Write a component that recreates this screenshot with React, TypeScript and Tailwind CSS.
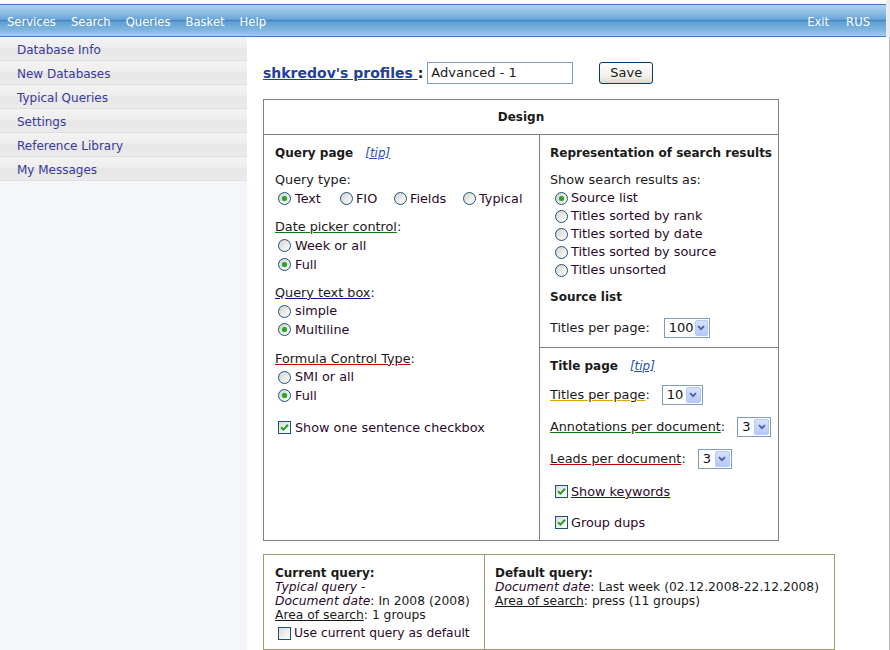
import React from "react";

const font = { fontFamily: '"DejaVu Sans", Verdana, sans-serif' };

const Radio = ({ checked }: { checked?: boolean }) => (
  <span className="inline-flex h-[13px] w-[13px] shrink-0 items-center justify-center rounded-full border border-[#1c5180] bg-[linear-gradient(135deg,#d4d4cc,#ffffff)]">
    {checked && <span className="h-[5px] w-[5px] rounded-full bg-[#2aa52a] shadow-[0_0_1px_#61c561]" />}
  </span>
);

const Check = ({ checked }: { checked?: boolean }) => (
  <span className="inline-flex h-[13px] w-[13px] shrink-0 items-center justify-center border border-[#1c5180] bg-[linear-gradient(135deg,#dcdcd7,#ffffff)]">
    {checked && (
      <svg width="9" height="9" viewBox="0 0 9 9">
        <path d="M1 4.2 L3.4 6.6 L8 1.8" fill="none" stroke="#21a121" strokeWidth="2" />
      </svg>
    )}
  </span>
);

const Select = ({ value, className }: { value: string; className: string }) => (
  <span className={"inline-flex h-[20px] items-center border border-[#7f9db9] bg-white pl-[4px] text-[13px] text-[#111] " + className}>
    <span className="flex-1">{value}</span>
    <span className="m-[1px] flex h-[16px] w-[15px] items-center justify-center rounded-[2px] border border-[#b6c9f4] bg-[linear-gradient(#d7e3fd,#b3c8f8)]">
      <svg width="8" height="6" viewBox="0 0 8 6">
        <path d="M1 1.2 L4 4.2 L7 1.2" fill="none" stroke="#4d5f9c" strokeWidth="1.8" />
      </svg>
    </span>
  </span>
);

const RadioLine = ({ label, checked, className = "" }: { label: string; checked?: boolean; className?: string }) => (
  <div className={"flex items-center gap-[4px] " + className}>
    <Radio checked={checked} />
    <span className="text-[#2a0a2a]">{label}</span>
  </div>
);

const Tip = () => (
  <a className="text-[12px] italic text-[#2850b0] underline" href="#">[tip]</a>
);

export default function App() {
  const nav = ["Services", "Search", "Queries", "Basket", "Help"];
  const side = ["Database Info", "New Databases", "Typical Queries", "Settings", "Reference Library", "My Messages"];
  return (
    <div className="flex h-[650px] w-[890px] overflow-hidden bg-white text-[12.8px] text-[#1a1a1a]" style={font}>
      <div className="flex w-[886px] flex-col">
        <div className="h-[4px] shrink-0 bg-white" />
        <div className="flex h-[33px] shrink-0 items-center border-y border-[#3d80c0] bg-[linear-gradient(#b2d2ee_0%,#8dbde4_25%,#6aa6d8_46%,#4687c5_50%,#62a0d5_56%,#7fb4df_80%,#a6cbea_100%)] pt-[4px] text-[11.6px] text-white">
          <div className="flex gap-[15px] pl-[7px]">
            {nav.map((n) => (
              <span key={n}>{n}</span>
            ))}
          </div>
          <div className="ml-auto flex gap-[17px] pr-[16px]">
            <span>Exit</span>
            <span>RUS</span>
          </div>
        </div>
        <div className="flex min-h-0 flex-1">
          <div className="w-[247px] shrink-0 bg-[#f5f6fa]">
            {side.map((s) => (
              <div
                key={s}
                className="flex h-[24px] items-center border-b border-[#dedede] bg-[linear-gradient(#f3f3f3_0%,#efefef_40%,#e6e6e6_55%,#ebebeb_100%)] pl-[17px] pt-[3px] text-[12px] text-[#3a3a9a]"
              >
                {s}
              </div>
            ))}
          </div>
          <div className="flex-1 pl-[16px] pt-[25px]">
            <div className="flex h-[22px] items-center">
              <a href="#" className="text-[14px] font-bold text-[#1f3f9a] underline">shkredov's profiles{"\u00a0"}</a>
              <span className="text-[14px] font-bold">:</span>
              <span className="ml-[4px] flex h-[22px] w-[146px] items-center border border-[#7f9db9] bg-white pl-[3px] text-[13px]">Advanced - 1</span>
              <span className="ml-[26px] flex h-[22px] w-[54px] items-center justify-center rounded-[3px] border border-[#003c74] bg-[linear-gradient(#ffffff,#f0efe8_70%,#dcd9cc)] text-[13px]">Save</span>
            </div>

            <div className="mt-[15px] w-[516px] border border-[#808080]">
              <div className="flex h-[35px] items-center justify-center border-b border-[#808080] text-[12px] font-bold">Design</div>
              <div className="flex">
                <div className="w-[276px] border-r border-[#808080] pb-[10px] pl-[11px] pt-[8px]">
                  <div className="flex h-[19px] items-center gap-[12px]">
                    <span className="text-[12px] font-bold">Query page</span>
                    <Tip />
                  </div>
                  <div className="mt-[8px] flex h-[19px] items-center">Query type:</div>
                  <div className="flex h-[19px] items-center pl-[3px]">
                    <div className="flex w-[62px] items-center gap-[4px]"><Radio checked /><span className="text-[#2a0a2a]">Text</span></div>
                    <div className="flex w-[54px] items-center gap-[3px]"><Radio /><span className="text-[#2a0a2a]">FIO</span></div>
                    <div className="flex w-[69px] items-center gap-[3px]"><Radio /><span className="text-[#2a0a2a]">Fields</span></div>
                    <div className="flex items-center gap-[3px]"><Radio /><span className="text-[#2a0a2a]">Typical</span></div>
                  </div>
                  <div className="mt-[9px] flex h-[19px] items-center">
                    <span className="underline decoration-[#0a7a0a]">Date picker control</span>:
                  </div>
                  <RadioLine label="Week or all" className="h-[19px] pl-[3px]" />
                  <RadioLine label="Full" checked className="h-[19px] pl-[3px]" />
                  <div className="mt-[9px] flex h-[19px] items-center">
                    <span className="underline decoration-[#1010a0]">Query text box</span>:
                  </div>
                  <RadioLine label="simple" className="h-[18px] pl-[3px]" />
                  <RadioLine label="Multiline" checked className="h-[19px] pl-[3px]" />
                  <div className="mt-[10px] flex h-[19px] items-center">
                    <span className="underline decoration-[#d00000]">Formula Control Type</span>:
                  </div>
                  <RadioLine label="SMI or all" className="h-[18px] pl-[3px]" />
                  <RadioLine label="Full" checked className="h-[19px] pl-[3px]" />
                  <div className="mt-[13px] flex h-[19px] items-center gap-[4px] pl-[3px]">
                    <Check checked />
                    <span className="text-[#2a0a2a]">Show one sentence checkbox</span>
                  </div>
                </div>
                <div className="flex flex-1 flex-col">
                  <div className="border-b border-[#808080] pb-[9px] pl-[10px] pt-[8px]">
                    <div className="flex h-[19px] items-center whitespace-nowrap text-[12px] font-bold">Representation of search results</div>
                    <div className="mt-[9px] flex h-[18px] items-center">Show search results as:</div>
                    <div className="pl-[5px]">
                      <div className="flex h-[18px] items-center gap-[3px]"><Radio checked /><span className="text-[#2a0a2a]">Source list</span></div>
                      <div className="flex h-[18px] items-center gap-[3px]"><Radio /><span className="text-[#2a0a2a]">Titles sorted by rank</span></div>
                      <div className="flex h-[18px] items-center gap-[3px]"><Radio /><span className="text-[#2a0a2a]">Titles sorted by date</span></div>
                      <div className="flex h-[18px] items-center gap-[3px]"><Radio /><span className="text-[#2a0a2a]">Titles sorted by source</span></div>
                      <div className="flex h-[18px] items-center gap-[3px]"><Radio /><span className="text-[#2a0a2a]">Titles unsorted</span></div>
                    </div>
                    <div className="mt-[8px] flex h-[19px] items-center text-[12px] font-bold">Source list</div>
                    <div className="mt-[11px] flex h-[21px] items-center gap-[14px]">
                      <span>Titles per page:</span>
                      <Select value="100" className="w-[46px]" />
                    </div>
                  </div>
                  <div className="pb-[8px] pl-[10px] pt-[8px]">
                    <div className="flex h-[19px] items-center gap-[12px]">
                      <span className="text-[12px] font-bold">Title page</span>
                      <Tip />
                    </div>
                    <div className="mt-[9px] flex h-[21px] items-center gap-[12px]">
                      <span><span className="underline decoration-[#e8a000]">Titles per page</span>:</span>
                      <Select value="10" className="w-[41px]" />
                    </div>
                    <div className="mt-[11px] flex h-[21px] items-center gap-[12px]">
                      <span><span className="underline decoration-[#0a7a0a]">Annotations per document</span>:</span>
                      <Select value="3" className="w-[34px]" />
                    </div>
                    <div className="mt-[11px] flex h-[21px] items-center gap-[12px]">
                      <span><span className="underline decoration-[#c00000]">Leads per document</span>:</span>
                      <Select value="3" className="w-[34px]" />
                    </div>
                    <div className="mt-[13px] flex h-[19px] items-center gap-[3px] pl-[5px]">
                      <Check checked />
                      <a href="#" className="text-[#2a0a2a] underline decoration-[#1010a0]">Show keywords</a>
                    </div>
                    <div className="mt-[12px] flex h-[19px] items-center gap-[3px] pl-[5px]">
                      <Check checked />
                      <span className="text-[#2a0a2a]">Group dups</span>
                    </div>
                  </div>
                </div>
              </div>
            </div>

            <div className="mt-[13px] flex h-[96px] w-[572px] border border-[#9c9c70] text-[12.3px] leading-[14px]">
              <div className="w-[221px] border-r border-[#9c9c70] pl-[11px] pt-[11px]">
                <div className="text-[12px] font-bold">Current query:</div>
                <div className="italic text-[#2a0a2a]">Typical query -</div>
                <div><span className="italic text-[#2a0a2a]">Document date</span>: In 2008 (2008)</div>
                <div><span className="underline">Area of search</span>: 1 groups</div>
                <div className="mt-[4px] flex items-center gap-[3px] pl-[3px]">
                  <Check />
                  <span className="text-[#2a0a2a]">Use current query as default</span>
                </div>
              </div>
              <div className="flex-1 pl-[10px] pt-[11px]">
                <div className="text-[12px] font-bold">Default query:</div>
                <div><span className="italic text-[#2a0a2a]">Document date</span>: Last week (02.12.2008-22.12.2008)</div>
                <div><span className="underline">Area of search</span>: press (11 groups)</div>
              </div>
            </div>
          </div>
        </div>
      </div>
      <div className="flex w-[4px] flex-col">
        <div className="h-[37px] shrink-0 bg-[#ececec]" />
        <div className="flex-1 border-r border-[#b8b8b8] bg-white" />
      </div>
    </div>
  );
}
